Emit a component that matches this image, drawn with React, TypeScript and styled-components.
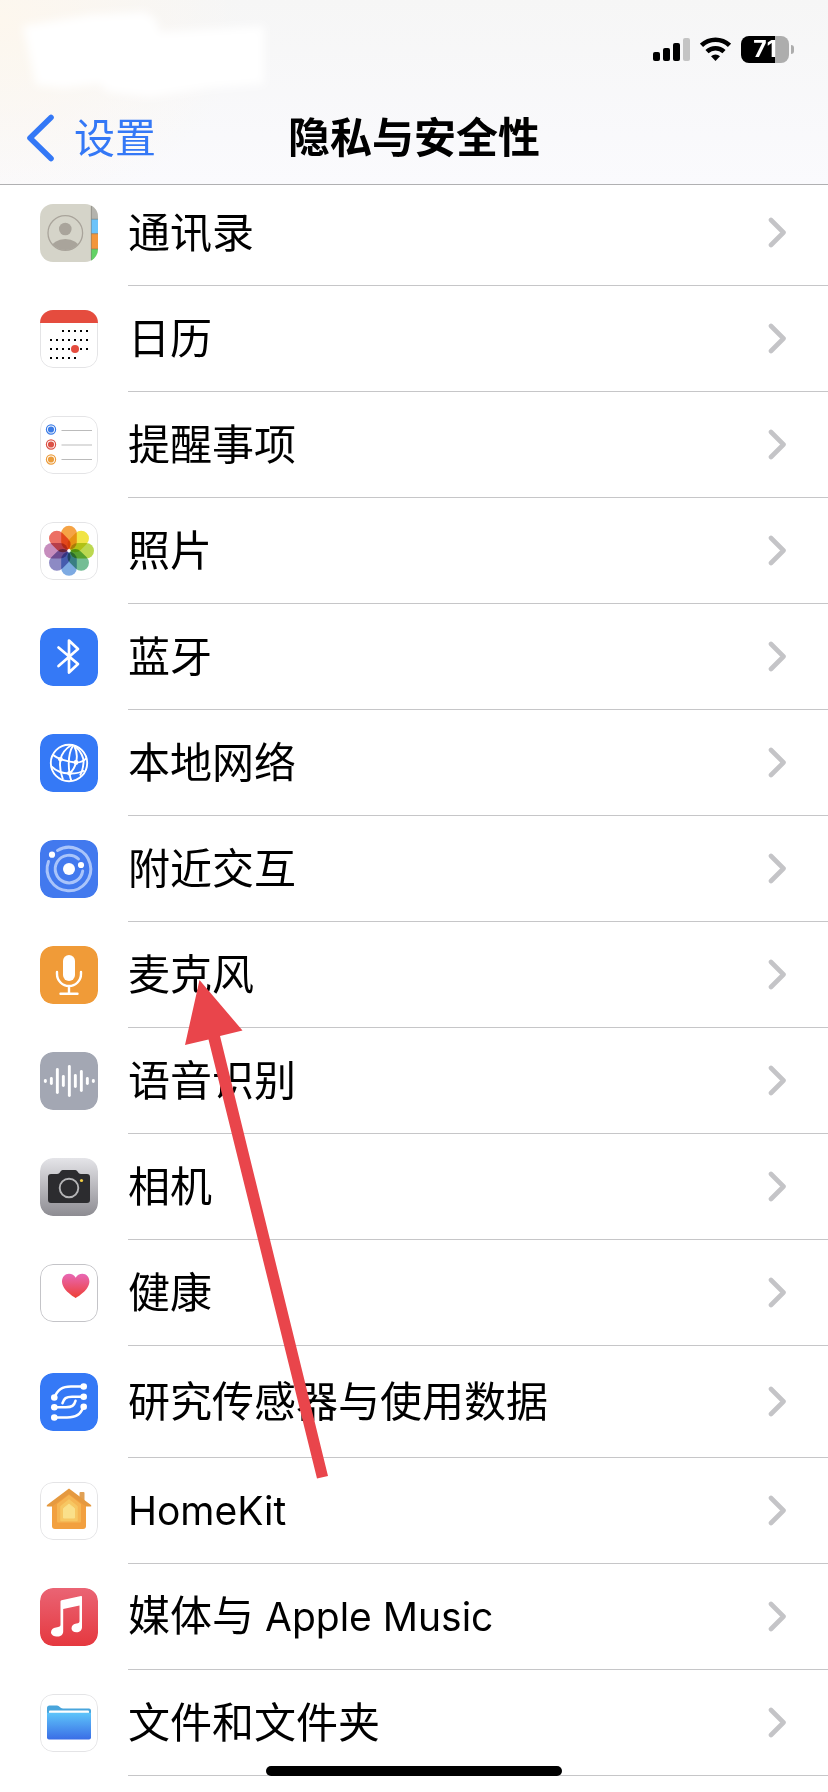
import React from 'react';
import styled, { createGlobalStyle } from 'styled-components';

const GlobalStyle = createGlobalStyle`
  *, *::before, *::after { box-sizing: border-box; }
  body {
    margin: 0;
    background: #fff;
    color: #000;
    font-family: Inter, "Noto Sans CJK SC", sans-serif;
  }
`;

const Page = styled.div`
  position: relative;
  min-height: 100vh;
  padding-bottom: 16px;
  background: #fff;
`;

const Header = styled.header`
  position: sticky;
  top: 0;
  z-index: 2;
  height: 185px;
  display: flex;
  flex-direction: column;
  border-bottom: 1px solid #b0b0b2;
  background:
    radial-gradient(ellipse 240px 200px at 0 20px, #fdf7ee, rgba(253, 247, 238, 0)),
    linear-gradient(#f6f6f6, #fafafd);
`;

const StatusBar = styled.div`
  height: 98px;
  padding: 36px 34px 0 0;
  display: flex;
  align-items: flex-start;
  justify-content: flex-end;
  gap: 10px;
`;

const Smudge = styled.svg`
  position: absolute;
  left: 0;
  top: 0;
`;

const Battery = styled.div`
  display: flex;
  align-items: center;
  gap: 2px;
`;

const BatteryBody = styled.div`
  width: 48px;
  height: 27px;
  border-radius: 8px;
  background: linear-gradient(to right, #000 71%, #adadad 71%);
  color: #fff;
  font-size: 23px;
  font-weight: 700;
  line-height: 27px;
  text-align: center;
`;

const BatteryCap = styled.div`
  width: 3px;
  height: 9px;
  border-radius: 0 4px 4px 0;
  background: #adadad;
`;

const NavBar = styled.nav`
  flex: 1;
  padding: 0 26px 6px;
  display: grid;
  grid-template-columns: 1fr auto 1fr;
  align-items: center;
`;

const BackButton = styled.button`
  justify-self: start;
  display: flex;
  align-items: center;
  gap: 18px;
  padding: 0;
  border: 0;
  background: none;
  color: #3478f6;
  font: inherit;
  font-size: 41px;
  line-height: 56px;
  cursor: pointer;
`;

const Title = styled.h1`
  margin: 0;
  font-size: 42px;
  font-weight: 700;
  line-height: 56px;
`;

const List = styled.ul`
  position: relative;
  margin: -5px 0 0;
  padding: 0;
  list-style: none;
`;

const Row = styled.a<{ $tall?: boolean }>`
  height: ${(p) => (p.$tall ? 112 : 106)}px;
  padding-left: 40px;
  display: flex;
  align-items: center;
  gap: 30px;
  color: inherit;
  text-decoration: none;
`;

const RowBody = styled.span`
  flex: 1;
  align-self: stretch;
  padding-right: 41px;
  display: flex;
  align-items: center;
  justify-content: space-between;
  border-bottom: 1px solid #c6c6c8;
`;

const Label = styled.span`
  font-size: 42px;
  line-height: 56px;
`;

const Latin = styled.span`
  font-size: 39px;
`;

const Tile = styled.svg`
  flex: none;
  width: 58px;
  height: 58px;
  border-radius: 13px;
`;

const Pointer = styled.svg`
  position: absolute;
  left: 184px;
  top: 800px;
  pointer-events: none;
`;

const HomeIndicator = styled.div`
  position: fixed;
  z-index: 3;
  bottom: 16px;
  left: 50%;
  width: 296px;
  height: 10px;
  margin-left: -148px;
  border-radius: 5px;
  background: #000;
`;

const Frame = ({ color = '#e4e4e6' }: { color?: string }) => (
  <rect x=".5" y=".5" width="57" height="57" rx="12.5" fill="#fff" stroke={color} />
);

const Fill = ({ color }: { color: string }) => <rect width="58" height="58" rx="13" fill={color} />;

const Contacts = () => (
  <>
    <rect width="58" height="58" fill="#d5d4c9" />
    <rect x="51" width="7" height="15" fill="#b4b3ad" />
    <rect x="51" y="15" width="7" height="15" fill="#6cc3fa" />
    <rect x="51" y="29.5" width="7" height="15.5" fill="#f2963c" />
    <rect x="51" y="45" width="7" height="13" fill="#62d265" />
    <path d="M51.3 2v54M51 15.2h7M51 29.7h7M51 45h7" stroke="#77756b" strokeWidth=".8" opacity=".7" />
    <clipPath id="contact-ring"><circle cx="25.3" cy="29" r="17" /></clipPath>
    <g clipPath="url(#contact-ring)" fill="#a9a49b">
      <circle cx="25.3" cy="25" r="6.3" />
      <ellipse cx="25.3" cy="44" rx="14" ry="9" />
    </g>
    <circle cx="25.3" cy="29" r="17.3" fill="none" stroke="#a9a49b" strokeWidth="1.3" />
  </>
);

const calendarRows = [
  { y: 21, from: 2, to: 6 },
  { y: 30, from: 0, to: 6 },
  { y: 39, from: 0, to: 6 },
  { y: 48, from: 0, to: 4 },
];

const Calendar = () => (
  <>
    <Frame />
    <rect width="58" height="13" fill="#e54c3e" />
    {calendarRows.map(({ y, from, to }) =>
      Array.from({ length: to - from + 1 }, (_, i) => (
        <rect key={`${y}-${i}`} x={10 + (from + i) * 6} y={y - 1} width="2" height="2" />
      )),
    )}
    <circle cx="35" cy="39" r="4" fill="#e54c3e" />
  </>
);

const Reminders = () => (
  <>
    <Frame />
    {['#3c7ce6', '#dc5246', '#eb9c3c'].map((c, i) => (
      <g key={c}>
        <circle cx="11" cy={13.5 + i * 15} r="4.6" fill="none" stroke={c} strokeWidth="1.2" />
        <circle cx="11" cy={13.5 + i * 15} r="3.1" fill={c} />
        <path d={`M21.5 ${14.5 + i * 14.5}H52`} stroke="#bbb" />
      </g>
    ))}
  </>
);

const petals = ['#f5a345', '#f1e445', '#bcd850', '#74bd94', '#7daae2', '#8d8ac4', '#c68dbd', '#ec6f64'];

const Photos = () => (
  <>
    <Frame />
    <g transform="translate(29 28.7)" style={{ isolation: 'isolate' }}>
      {petals.map((c, i) => (
        <rect
          key={c}
          x="-7.8"
          y="-25"
          width="15.6"
          height="24"
          rx="7.8"
          fill={c}
          transform={`rotate(${i * 45})`}
          style={{ mixBlendMode: 'multiply' }}
        />
      ))}
      <circle r="1.7" fill="#fff" />
    </g>
  </>
);

const Bluetooth = () => (
  <>
    <Fill color="#3579f6" />
    <path
      d="M18.5 19.5 38 36 29 44.5V12.5L38 21 18.5 38"
      fill="none"
      stroke="#fff"
      strokeWidth="2.7"
      strokeLinecap="round"
      strokeLinejoin="round"
    />
  </>
);

const Network = () => (
  <>
    <Fill color="#3579f6" />
    <g fill="none" stroke="#fff" strokeWidth="1.9">
      <circle cx="29" cy="29" r="18.2" />
      <path d="M31.500 11C25 15 21.500 20 20.500 25.500 19.500 31 20 38 23 45.500" />
      <path d="M33 11.500C28.500 19 28 29 29.500 39.500 30 42.500 30.500 45 31.500 47" />
      <path d="M34 11.500C37 17 37.500 23 36 28.500 35 33 33 36.500 29.500 39.500" />
      <path d="M35 12C41 17 44 24 43.500 29 43 34 42 38 40 41.500" />
      <path d="M12.500 20.500C17 24.500 28 28 36 28.500 41 28.500 44.500 26.500 46.500 24" />
      <path d="M11.500 32.500C16 37 22 39.300 29.500 39.500 36 39.600 41 38.500 44.500 36.500" />
    </g>
    <g fill="#fff">
      <circle cx="20.5" cy="25.3" r="2.4" />
      <circle cx="36" cy="28.5" r="2.4" />
      <circle cx="29.5" cy="39.3" r="2.4" />
    </g>
  </>
);

const Nearby = () => (
  <>
    <Fill color="#4279ee" />
    <g fill="none" stroke="#a9c4fa" strokeWidth="3" strokeLinecap="round">
      <path d="M17.5 10.5A21.8 21.8 0 1 1 8.5 21.5" />
      <path d="M42.7 31A13.8 13.8 0 1 1 38.5 19" />
    </g>
    <g fill="#fff">
      <circle cx="29" cy="29" r="6" />
      <circle cx="12" cy="14.7" r="3.1" />
      <circle cx="41" cy="25" r="3.1" />
    </g>
  </>
);

const Microphone = () => (
  <>
    <Fill color="#f09b38" />
    <rect x="23" y="9" width="12" height="26" rx="6" fill="#fff" />
    <path
      d="M17 26v2a12 12 0 0 0 24 0v-2M29 40v7M20.5 47.7h17"
      fill="none"
      stroke="#fff"
      strokeWidth="2.4"
      strokeLinecap="round"
    />
  </>
);

const waveHeights = [4, 8, 26, 12, 32, 14, 22, 8, 4];

const Speech = () => (
  <>
    <Fill color="#a3a7b3" />
    {waveHeights.map((h, i) => (
      <rect key={i} x={3.9 + i * 6} y={29 - h / 2} width="2.9" height={h} rx="1.45" fill="#fff" />
    ))}
  </>
);

const Camera = () => (
  <>
    <linearGradient id="camera-back" x2="0" y2="1">
      <stop stopColor="#e4e4e8" />
      <stop offset="1" stopColor="#8d8c92" />
    </linearGradient>
    <Fill color="url(#camera-back)" />
    <path
      d="M11 16h6c2 0 2.500-1 3.500-2.500C21.500 12.300 22 12 24 12h10c2 0 2.500.3 3.500 1.500C38.500 15 39 16 41 16h6a3 3 0 0 1 3 3v23a3 3 0 0 1-3 3H11a3 3 0 0 1-3-3V19a3 3 0 0 1 3-3z"
      fill="#2c2c2f"
    />
    <circle cx="29" cy="30" r="9.300" fill="#2c2c2f" stroke="#b4b4b6" strokeWidth="1.900" />
    <circle cx="41.500" cy="22.500" r="1.600" fill="#f4cf45" />
  </>
);

const Health = () => (
  <>
    <Frame color="#c4c4c8" />
    <linearGradient id="heart" x2="0" y2="1">
      <stop stopColor="#e868b6" />
      <stop offset="1" stopColor="#ee3f35" />
    </linearGradient>
    <path
      d="M35.700 34C34 33 22 26 22 17.500c0-4.500 3-7.800 7-7.800 3 0 5.300 1.500 6.700 4 1.400-2.500 3.700-4 6.700-4 4 0 7 3.300 7 7.800C49.400 26 37.400 33 35.700 34z"
      fill="url(#heart)"
    />
  </>
);

const Research = () => (
  <>
    <Fill color="#3579f6" />
    <path
      d="M43.700 13.500H31c-9 0-13 3-16.700 11M43.700 23.700H32c-6 0-8 1.500-9.500 6.500M14.300 34.300H26c6 0 8-1.500 9.500-6.500M43.700 33.700C40 42 36 44.500 27 44.500H14.300"
      fill="none"
      stroke="#fff"
      strokeWidth="2.600"
      strokeLinecap="round"
    />
    <g fill="#fff">
      <circle cx="43.700" cy="13.500" r="3.300" />
      <circle cx="43.700" cy="23.700" r="3.300" />
      <circle cx="43.700" cy="33.700" r="3.300" />
      <circle cx="14.300" cy="24.500" r="3.300" />
      <circle cx="14.300" cy="34.300" r="3.300" />
      <circle cx="14.300" cy="44.500" r="3.300" />
    </g>
  </>
);

const Home = () => (
  <>
    <Frame />
    <path d="M39.500 18v-7q0-1 1-1h3q1 0 1 1v11z" fill="#e0a055" />
    <path d="M12 21 29 9l17 12v23q0 3-3 3H15q-3 0-3-3z" fill="#f2a03f" />
    <path d="M29 6.500 51 23q1 1.500-.5 1.500H46L29 12 12 24.500H7.500Q6 24.500 7 23z" fill="#e5993f" />
    <path d="M29 14 40 22.500V39.500H18V22.500z" fill="#f5b553" stroke="#f5b553" strokeWidth="2" strokeLinejoin="round" />
    <path d="M29 18 37 24.500V38.500H21V24.500z" fill="#f7c763" stroke="#f7c763" strokeWidth="1.500" strokeLinejoin="round" />
    <path d="M29 22 34.500 26.500v9.500h-11V26.500z" fill="#fae08a" stroke="#fae08a" strokeLinejoin="round" />
  </>
);

const Music = () => (
  <>
    <linearGradient id="music-back" x2="0" y2="1">
      <stop stopColor="#ea6474" />
      <stop offset="1" stopColor="#e5383f" />
    </linearGradient>
    <Fill color="url(#music-back)" />
    <path
      d="M21.500 12.300 41 8q1-.2 1 .8v30.500c0 3-2.500 5-5.500 5-2.800 0-5-1.500-5-4 0-2.600 2-4.300 5-4.700 2.300-.4 3-.8 3-2.600V17.500L23.200 21v22.500c0 3-2.500 5-5.700 5-3.500 0-6.500-1.500-6.500-4.300 0-2.600 2-4.300 5-4.700 3.500-.5 4.500-1 4.500-3V13.500q0-1 1-1.200z"
      fill="#fff"
    />
  </>
);

const Files = () => (
  <>
    <Frame />
    <linearGradient id="folder" x2="0" y2="1">
      <stop stopColor="#5ec5fa" />
      <stop offset="1" stopColor="#3a6de6" />
    </linearGradient>
    <path d="M7 14q0-2.500 2.500-2.500H17c2.500 0 3 3 6 3h26q2 0 2 2V24H7z" fill="#49a5dc" />
    <rect x="9" y="16.500" width="40" height="5" rx="1" fill="#fff" />
    <path d="M7 18.700h44V43.500q0 2-2 2H9q-2 0-2-2z" fill="url(#folder)" />
  </>
);

const rows: { label: React.ReactNode; icon: React.FC; tall?: boolean }[] = [
  { label: '通讯录', icon: Contacts },
  { label: '日历', icon: Calendar },
  { label: '提醒事项', icon: Reminders },
  { label: '照片', icon: Photos },
  { label: '蓝牙', icon: Bluetooth },
  { label: '本地网络', icon: Network },
  { label: '附近交互', icon: Nearby },
  { label: '麦克风', icon: Microphone },
  { label: '语音识别', icon: Speech },
  { label: '相机', icon: Camera },
  { label: '健康', icon: Health },
  { label: '研究传感器与使用数据', icon: Research, tall: true },
  { label: <Latin>HomeKit</Latin>, icon: Home },
  { label: <>媒体与<Latin> Apple Music</Latin></>, icon: Music },
  { label: '文件和文件夹', icon: Files },
];

const Signal = () => (
  <svg width="37" height="27" viewBox="0 0 37 27" aria-hidden="true">
    <rect y="16" width="7" height="9" rx="2" />
    <rect x="10" y="12" width="7" height="13" rx="2" />
    <rect x="20" y="7" width="7" height="18" rx="2" />
    <rect x="30" y="2" width="7" height="23" rx="2" fill="#c4c4c4" />
  </svg>
);

const Wifi = () => (
  <svg width="31" height="27" viewBox="0 0 31 27" aria-hidden="true">
    <g fill="none" stroke="#000" strokeWidth="4.600">
      <path d="M1.500 9.300a20.500 20.500 0 0 1 28 0" />
      <path d="M7 15.600a12.600 12.600 0 0 1 17 0" />
    </g>
    <path d="M15.500 25 11 20.300a6.600 6.600 0 0 1 9 0z" />
  </svg>
);

export default function App() {
  return (
    <Page>
      <GlobalStyle />
      <Header>
        <Smudge width="290" height="110" aria-hidden="true">
          <filter id="soft" x="-10%" y="-20%" width="120%" height="140%">
            <feGaussianBlur stdDeviation="4" />
          </filter>
          <path
            d="M23 26 90 15 145 12 156 20 160 32 264 26V84L210 88 150 97 108 92 100 84 62 88 36 85z"
            fill="#fff"
            filter="url(#soft)"
          />
        </Smudge>
        <StatusBar>
          <Signal />
          <Wifi />
          <Battery>
            <BatteryBody>71</BatteryBody>
            <BatteryCap />
          </Battery>
        </StatusBar>
        <NavBar>
          <BackButton type="button">
            <svg width="30" height="48" viewBox="0 0 30 48" aria-hidden="true">
              <path
                d="M25 3.500 4 24l21 20.500"
                fill="none"
                stroke="currentColor"
                strokeWidth="5.600"
                strokeLinecap="round"
                strokeLinejoin="round"
              />
            </svg>
            设置
          </BackButton>
          <Title>隐私与安全性</Title>
        </NavBar>
      </Header>
      <List>
        {rows.map(({ label, icon: Icon, tall }) => (
          <li key={Icon.name}>
            <Row href="#" $tall={tall}>
              <Tile viewBox="0 0 58 58" aria-hidden="true">
                <Icon />
              </Tile>
              <RowBody>
                <Label>{label}</Label>
                <svg width="20" height="32" viewBox="0 0 20 32" aria-hidden="true">
                  <path
                    d="M4 3 16.500 15.500 4 28"
                    fill="none"
                    stroke="#c4c4c7"
                    strokeWidth="4.600"
                    strokeLinecap="round"
                    strokeLinejoin="round"
                  />
                </svg>
              </RowBody>
            </Row>
          </li>
        ))}
        <Pointer width="146" height="500" viewBox="0 0 146 500" aria-hidden="true">
          <path d="M15.500 0 58.500 50.500 36 56 144 496 133 498.500 24.500 59.500 1 65z" fill="#e9454b" />
        </Pointer>
      </List>
      <HomeIndicator />
    </Page>
  );
}
